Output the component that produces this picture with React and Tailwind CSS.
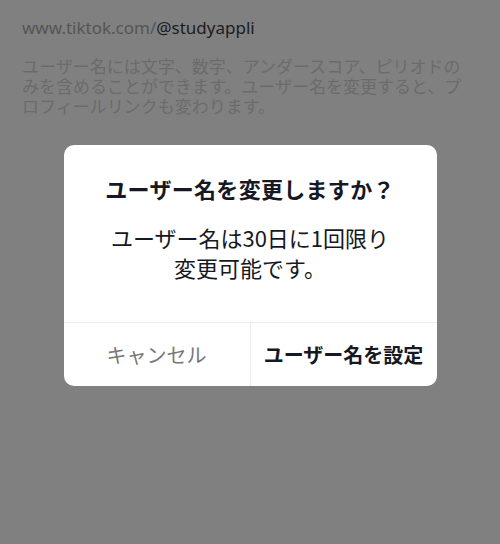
export default function App() {
    const jp = { fontFamily: '"Noto Sans CJK JP", "Noto Sans", sans-serif' };

    return (
        <div className="relative w-[500px] h-[544px] overflow-hidden bg-[#808080]" style={jp}>
            {/* Page behind the modal */}
            <div className="px-[22px] pt-[16px]">
                <p className="text-[17px] leading-[24px] text-[#555555]" style={{ fontFamily: '"Noto Sans", "Liberation Sans", sans-serif' }}>
                    www.tiktok.com/<span className="text-[#1c1c1c]">@studyappli</span>
                </p>
                <div className="mt-[16px] text-[17px] leading-[20px] text-[#6b6b6b] whitespace-nowrap">
                    <p>ユーザー名には文字、数字、アンダースコア、ピリオドの</p>
                    <p>みを含めることができます。ユーザー名を変更すると、プ</p>
                    <p>ロフィールリンクも変わります。</p>
                </div>
            </div>

            {/* Modal */}
            <div className="absolute inset-0 flex justify-center pt-[145px]">
                <div className="w-[373px] h-[241px] bg-white rounded-[10px] flex flex-col">
                    <div className="flex-1 flex flex-col items-center pt-[28px]">
                        <h2 className="text-[22px] leading-[30px] font-bold tracking-[0.3px] text-[#161823]">
                            ユーザー名を変更しますか？
                        </h2>
                        <p className="mt-[19px] text-[22px] leading-[30px] text-[#161823] text-center">
                            ユーザー名は30日に1回限り<br />
                            変更可能です。
                        </p>
                    </div>
                    <div className="h-[64px] flex border-t border-[#ececec]">
                        <button className="w-[187px] text-[20px] text-[#777777] border-r border-[#ececec]">
                            キャンセル
                        </button>
                        <button className="flex-1 text-[20px] font-bold text-[#161823]">
                            ユーザー名を設定
                        </button>
                    </div>
                </div>
            </div>
        </div>
    );
}
